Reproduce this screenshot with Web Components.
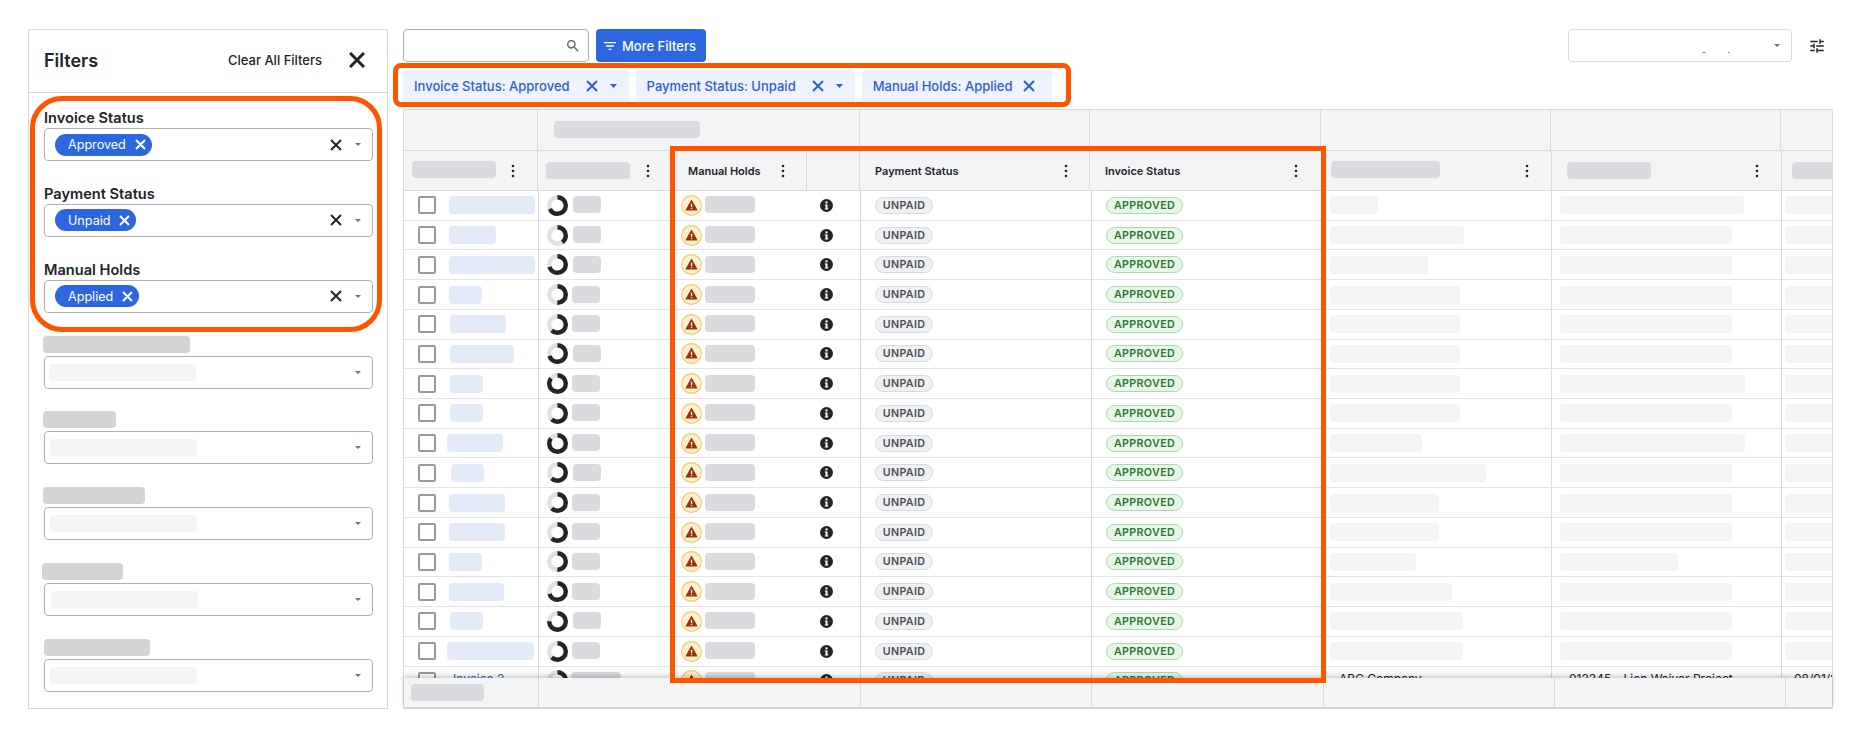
<!DOCTYPE html>
<html>
<head>
<meta charset="utf-8">
<title>Invoices</title>
<style>
  html, body { margin: 0; background: #fff; }
  body { font-family: Inter, "Liberation Sans", sans-serif; color: #212529; overflow: hidden; }
</style>
</head>
<body>
<invoice-page></invoice-page>
<script>
const xIcon = (size, stroke, color) => `<svg width="${size}" height="${size}" viewBox="0 0 ${size} ${size}" style="display:block;flex:none"><path d="M1 1L${size-1} ${size-1}M${size-1} 1L1 ${size-1}" stroke="${color}" stroke-width="${stroke}" fill="none"/></svg>`;
const caret = (w, h, color) => `<svg width="${w}" height="${h}" viewBox="0 0 ${w} ${h}" style="display:block;flex:none"><path d="M0 0H${w}L${w/2} ${h}Z" fill="${color}"/></svg>`;

class filterField extends HTMLElement {
  constructor() {
    super();
    let shadowRoot = this.attachShadow({mode: 'open'});
    const label = this.getAttribute('label');
    const tag = this.getAttribute('tag');
    const tagWidth = this.getAttribute('tag-width');
    const skelLabel = this.getAttribute('skel-label') || '0,0';
    const skelLeft = this.getAttribute('skel-left') || '5';
    const [labelLeft, labelWidth] = skelLabel.split(',');
    shadowRoot.innerHTML = `
    <style>
      :host{ display:block; height:75.86px; }
      .label{ height:20px; line-height:20px; font-size:14.6px; font-weight:600; color:#212529; }
      .skelLabel{ height:17px; margin-top:0; margin-bottom:3px; background:#d3d4d6; border-radius:4px; width:${labelWidth}px; margin-left:${labelLeft}px; }
      .box{ box-sizing:border-box; height:33px; border:1px solid #adb1b5; border-radius:4px; display:flex; align-items:center; padding-right:11px; background:#fff; }
      .tag{ display:flex; align-items:center; justify-content:space-between; box-sizing:border-box; width:${tagWidth}px; height:22px; margin-left:10px; padding:0 6px 0 13px; background:#2c66e0; color:#fff; border-radius:11px; font-size:12.6px; }
      .skel{ width:147px; height:17px; margin-left:${skelLeft}px; background:#f3f4f6; border-radius:4px; }
      .right{ margin-left:auto; display:flex; align-items:center; gap:13px; }
    </style>
    ${label ? `<div class="label">${label}</div>` : `<div class="skelLabel"></div>`}
    <div class="box">
      ${tag ? `<div class="tag"><span>${tag}</span>${xIcon(11, 2, '#fff')}</div>` : `<div class="skel"></div>`}
      <div class="right">${tag ? xIcon(12, 2, '#212529') : ''}${caret(6, 3, '#6b7280')}</div>
    </div>`;
  }
}

class filterPanel extends HTMLElement {
  constructor() {
    super();
    let shadowRoot = this.attachShadow({mode: 'open'});
    shadowRoot.innerHTML = `
    <style>
      :host{ display:block; position:relative; box-sizing:border-box; flex:none; width:360px; height:680px; border:1px solid #d8dadd; background:#fff; }
      .head{ box-sizing:border-box; height:63px; border-bottom:1px solid #d8dadd; display:flex; align-items:center; padding:0 22px 2px 15px; }
      .title{ font-size:18px; font-weight:600; }
      .clear{ margin-left:auto; margin-right:27px; font-size:13px; font-weight:500; }
      .list{ padding:15px 14px 0 15px; }
      .ring{ position:absolute; left:1px; top:66px; box-sizing:border-box; width:352px; height:236px; border:5px solid #ff5500; border-radius:32px; pointer-events:none; }
    </style>
    <div class="head">
      <div class="title">Filters</div>
      <div class="clear">Clear All Filters</div>
      ${xIcon(16, 3, '#212529')}
    </div>
    <div class="list">
      <filter-field label="Invoice Status" tag="Approved" tag-width="97"></filter-field>
      <filter-field label="Payment Status" tag="Unpaid" tag-width="81"></filter-field>
      <filter-field label="Manual Holds" tag="Applied" tag-width="84"></filter-field>
      <filter-field skel-label="-1,147" skel-left="4"></filter-field>
      <filter-field skel-label="-1,73" skel-left="5"></filter-field>
      <filter-field skel-label="-1,102" skel-left="5"></filter-field>
      <filter-field skel-label="-2,81" skel-left="6"></filter-field>
      <filter-field skel-label="0,106" skel-left="5"></filter-field>
    </div>
    <div class="ring"></div>`;
  }
}

class filterChip extends HTMLElement {
  constructor() {
    super();
    let shadowRoot = this.attachShadow({mode: 'open'});
    const hasCaret = this.hasAttribute('caret');
    shadowRoot.innerHTML = `
    <style>
      :host{ display:flex; align-items:center; box-sizing:border-box; height:32px; padding:0 ${hasCaret ? 12 : 17}px 0 11px; background:#edf2fd; border-radius:3px; color:#2c62c9; font-size:13px; font-weight:500; white-space:nowrap; }
      .x{ margin-left:${hasCaret ? 16 : 11}px; }
      .c{ margin-left:12px; }
    </style>
    <slot></slot>
    <span class="x">${xIcon(12, 2, '#2c62c9')}</span>
    ${hasCaret ? `<span class="c">${caret(7, 4, '#2c62c9')}</span>` : ''}`;
  }
}

class topBar extends HTMLElement {
  constructor() {
    super();
    let shadowRoot = this.attachShadow({mode: 'open'});
    shadowRoot.innerHTML = `
    <style>
      :host{ display:flex; align-items:stretch; height:33px; margin-bottom:8px; }
      .search{ box-sizing:border-box; width:186px; border:1px solid #adb1b5; border-radius:4px; display:flex; align-items:center; justify-content:flex-end; padding-right:7px; }
      .more{ box-sizing:border-box; width:110px; margin-left:7px; background:#2c66e0; border-radius:4px; color:#fff; display:flex; align-items:center; padding-left:6px; gap:4px; font-size:13px; font-weight:500; }
      .select{ box-sizing:border-box; width:224px; margin-left:auto; border:1px solid #d7d9dc; border-radius:4px; display:flex; align-items:center; justify-content:flex-end; padding-right:11px; position:relative; }
      .specks{ position:absolute; left:133px; top:22px; display:block; }
      .tune{ margin:0 7px 0 16px; align-self:center; display:block; }
    </style>
    <div class="search">
      <svg width="16" height="16" viewBox="0 0 24 24" fill="#5c6166"><path d="M15.5 14h-.79l-.28-.27A6.47 6.47 0 0 0 16 9.5 6.5 6.5 0 1 0 9.5 16c1.61 0 3.09-.59 4.23-1.57l.27.28v.79l5 4.99L20.49 19l-4.99-5zm-6 0C7.01 14 5 11.99 5 9.5S7.01 5 9.5 5 14 7.01 14 9.5 11.99 14 9.5 14z"/></svg>
    </div>
    <div class="more">
      <svg width="16" height="16" viewBox="0 0 24 24" fill="#fff"><path d="M10 18h4v-2h-4v2zM3 6v2h18V6H3zm3 7h12v-2H6v2z"/></svg>
      <span>More Filters</span>
    </div>
    <div class="select">
      <svg class="specks" width="30" height="2"><rect x="0" y="0" width="4" height="1" fill="#8a8d91"/><rect x="26" y="0" width="2" height="1" fill="#8a8d91"/></svg>
      ${caret(6, 3, '#6b7280')}
    </div>
    <svg class="tune" width="18" height="18" viewBox="0 0 24 24" fill="#212529"><path d="M3 17v2h6v-2H3zM3 5v2h10V5H3zm10 16v-2h8v-2h-8v-2h-2v6h2zM7 9v2H3v2h4v2h2V9H7zm14 4v-2H11v2h10zm-6-4h2V7h4V5h-4V3h-2v6z"/></svg>`;
  }
}

class progressRing extends HTMLElement {
  constructor() {
    super();
    let shadowRoot = this.attachShadow({mode: 'open'});
    const pct = Number(this.getAttribute('pct'));
    const c = 2 * Math.PI * 8.3;
    shadowRoot.innerHTML = `
    <style>:host{ display:block; flex:none; width:21px; height:21px; } svg{ display:block; }</style>
    <svg width="21" height="21" viewBox="0 0 21 21" fill="none" stroke-width="4.4">
      <circle cx="10.5" cy="10.5" r="8.3" stroke="#dfe1e4"/>
      <circle cx="10.5" cy="10.5" r="8.3" stroke="#212529" stroke-dasharray="${c * pct / 100} ${c}" transform="rotate(-90 10.5 10.5)"/>
    </svg>`;
  }
}

class kebabMenu extends HTMLElement {
  constructor() {
    super();
    let shadowRoot = this.attachShadow({mode: 'open'});
    shadowRoot.innerHTML = `
    <style>:host{ display:block; flex:none; width:4px; height:14px; } svg{ display:block; }</style>
    <svg width="4" height="14" viewBox="0 0 4 14" fill="#212529"><circle cx="2" cy="2" r="1.3"/><circle cx="2" cy="7" r="1.3"/><circle cx="2" cy="12" r="1.3"/></svg>`;
  }
}

class statusPill extends HTMLElement {
  constructor() {
    super();
    let shadowRoot = this.attachShadow({mode: 'open'});
    const green = this.getAttribute('kind') === 'green';
    shadowRoot.innerHTML = `
    <style>
      :host{ display:flex; align-items:center; justify-content:center; box-sizing:border-box; flex:none; height:17px; width:${green ? 77 : 58}px; border-radius:9px; border:1px solid ${green ? '#a6dca9' : '#d8dadd'}; background:${green ? '#e7f6e7' : '#eff0f2'}; color:${green ? '#2a7a30' : '#495057'}; font-size:10.7px; font-weight:600; letter-spacing:.35px; }
    </style>
    <slot></slot>`;
  }
}

class tableRow extends HTMLElement {
  constructor() {
    super();
    let shadowRoot = this.attachShadow({mode: 'open'});
    const d = JSON.parse(this.getAttribute('data'));
    const link = d.text
      ? `<span class="txt blue" style="margin-left:17px">${d.text}</span>`
      : `<div class="bar link" style="margin-left:${d.lx - 436}px;width:${d.lw}px"></div>`;
    const lightBar = (w, t) => t ? `<span class="txt" style="margin-left:9px">${t}</span>` : `<div class="bar light" style="width:${w}px"></div>`;
    shadowRoot.innerHTML = `
    <style>
      :host{ display:grid; box-sizing:border-box; height:29.73px; grid-template-columns:135px 136px 132px 54px 231px 230px 230px 230px 50px; border-bottom:1px solid #e1e3e6; background:#fff; flex:none; }
      .cell{ display:flex; align-items:center; min-width:0; overflow:hidden; white-space:nowrap; }
      .line{ border-right:1px solid #d8dadd; }
      .bar{ height:18px; border-radius:4px; flex:none; }
      .link{ background:#e4ebf8; }
      .light{ background:#f3f4f6; }
      .dark{ background:#d9dbde; height:17px; margin-top:-1px; }
      .check{ box-sizing:border-box; width:18px; height:18px; border:2px solid #9a9a9a; border-radius:2px; flex:none; margin-left:14px; }
      .txt{ font-size:12px; color:#212529; margin-bottom:4px; }
      .blue{ color:#2c62c9; }
    </style>
    <div class="cell line"><div class="check"></div>${link}</div>
    <div class="cell" style="padding-left:8px"><progress-ring pct="${d.pct}"></progress-ring><div class="bar dark" style="margin-left:${d.sx - 568}px;width:${d.sw || 28}px"></div></div>
    <div class="cell" style="padding-left:6px"><warn-badge></warn-badge><div class="bar dark" style="margin-left:3px;width:50px"></div></div>
    <div class="cell line" style="padding-left:13px"><info-dot></info-dot></div>
    <div class="cell line" style="padding-left:14px"><status-pill>UNPAID</status-pill></div>
    <div class="cell line" style="padding-left:14px"><status-pill kind="green">APPROVED</status-pill></div>
    <div class="cell line" style="padding-left:8px">${lightBar(d.a, d.textA)}</div>
    <div class="cell line" style="padding-left:8px">${lightBar(d.b, d.textB)}</div>
    <div class="cell" style="padding-left:3px">${lightBar(52, d.textC)}</div>`;
  }
}

class warnBadge extends HTMLElement {
  constructor() {
    super();
    let shadowRoot = this.attachShadow({mode: 'open'});
    shadowRoot.innerHTML = `
    <style>:host{ display:block; flex:none; width:21px; height:21px; } svg{ display:block; }</style>
    <svg width="21" height="21" viewBox="0 0 21 21">
      <circle cx="10.5" cy="10.5" r="9.9" fill="#fdf0cf" stroke="#f4c867" stroke-width="1.1"/>
      <path d="M10.5 5.4L15.8 15H5.2Z" fill="#9c2f0a" stroke="#9c2f0a" stroke-width="1.1" stroke-linejoin="round"/>
      <rect x="9.9" y="8.6" width="1.3" height="3.4" fill="#fff"/>
      <rect x="9.9" y="12.8" width="1.3" height="1.3" fill="#fff"/>
    </svg>`;
  }
}

class infoDot extends HTMLElement {
  constructor() {
    super();
    let shadowRoot = this.attachShadow({mode: 'open'});
    shadowRoot.innerHTML = `
    <style>:host{ display:block; flex:none; width:13px; height:13px; } svg{ display:block; }</style>
    <svg width="13" height="13" viewBox="0 0 13 13">
      <circle cx="6.5" cy="6.5" r="6.5" fill="#212529"/>
      <rect x="5.5" y="2.4" width="2" height="2" fill="#fff"/>
      <path d="M4.8 5.4H7.5V9.4H8.3V10.6H4.8V9.4H5.6V6.6H4.8Z" fill="#fff"/>
    </svg>`;
  }
}

const rowsData = [
  {lx:449,lw:86,pct:68,sx:573,a:48,b:184},
  {lx:449,lw:47,pct:40,sx:573,a:134,b:172},
  {lx:449,lw:86,pct:70,sx:573,a:98,b:172},
  {lx:449,lw:33,pct:50,sx:572,a:130,b:172},
  {lx:450,lw:56,pct:62,sx:572,a:130,b:172},
  {lx:450,lw:64,pct:70,sx:573,a:130,b:172},
  {lx:450,lw:33,pct:85,sx:572,a:130,b:185},
  {lx:450,lw:33,pct:62,sx:572,a:130,b:172},
  {lx:447,lw:56,pct:85,sx:572,a:92,b:185},
  {lx:451,lw:33,pct:62,sx:573,a:156,b:172},
  {lx:449,lw:56,pct:62,sx:572,a:109,b:172},
  {lx:449,lw:56,pct:62,sx:572,a:109,b:172},
  {lx:449,lw:33,pct:50,sx:572,a:86,b:118},
  {lx:449,lw:55,pct:70,sx:572,a:122,b:172},
  {lx:450,lw:33,pct:75,sx:573,a:133,b:172},
  {lx:447,lw:87,pct:62,sx:572,a:133,b:172},
  {text:'Invoice 2',pct:35,sx:571,sw:50,textA:'ABC Company',textB:'012345 - Lien Waiver Project',textC:'08/01/2023'}
];

class invoiceTable extends HTMLElement {
  constructor() {
    super();
    let shadowRoot = this.attachShadow({mode: 'open'});
    const rows = rowsData.map(r => `<table-row data='${JSON.stringify(r)}'></table-row>`).join('');
    shadowRoot.innerHTML = `
    <style>
      :host{ display:block; position:relative; box-sizing:border-box; height:600px; border:1px solid #d8dadd; border-bottom-width:2px; background:#fff; }
      .groupRow, .headRow, .footRow{ display:grid; background:#f3f4f6; box-sizing:border-box; }
      .groupRow{ height:41px; border-bottom:1px solid #d8dadd; grid-template-columns:134px 322px 230px 231px 230px 230px 51px; }
      .headRow{ height:40px; border-bottom:1px solid #d8dadd; grid-template-columns:134px 137px 132px 53px 230px 232px 230px 230px 50px; }
      .footRow{ height:29px; position:relative; box-shadow:0 -2px 5px rgba(0,0,0,.22); grid-template-columns:135px 322px 231px 232px 231px 231px 46px; }
      .cell{ display:flex; align-items:center; min-width:0; overflow:hidden; border-right:1px solid #d8dadd; box-sizing:border-box; }
      .cell:last-child{ border-right:0; }
      .kebab{ margin-left:auto; }
      .title{ font-size:11px; font-weight:600; color:#212529; white-space:nowrap; }
      .bar{ height:17px; background:#d9dbde; border-radius:4px; flex:none; }
      .body{ height:487px; overflow:hidden; display:flex; flex-direction:column; }
      .ring{ position:absolute; left:266px; top:36px; box-sizing:border-box; width:656px; height:537px; border:5px solid #ff5500; pointer-events:none; }
    </style>
    <div class="groupRow">
      <div class="cell"></div>
      <div class="cell" style="padding-left:16px"><div class="bar" style="width:146px;margin-top:-1px"></div></div>
      <div class="cell"></div><div class="cell"></div><div class="cell"></div><div class="cell"></div><div class="cell"></div>
    </div>
    <div class="headRow">
      <div class="cell" style="padding:0 22px 0 8px"><div class="bar" style="width:84px;margin-top:-3px"></div><kebab-menu class="kebab"></kebab-menu></div>
      <div class="cell" style="padding:0 24px 0 8px"><div class="bar" style="width:84px;margin-top:-1px"></div><kebab-menu class="kebab"></kebab-menu></div>
      <div class="cell" style="padding:0 21px 0 13px"><span class="title">Manual Holds</span><kebab-menu class="kebab"></kebab-menu></div>
      <div class="cell"></div>
      <div class="cell" style="padding:0 21px 0 15px"><span class="title">Payment Status</span><kebab-menu class="kebab"></kebab-menu></div>
      <div class="cell" style="padding:0 23px 0 15px"><span class="title">Invoice Status</span><kebab-menu class="kebab"></kebab-menu></div>
      <div class="cell" style="padding:0 22px 0 9px"><div class="bar" style="width:109px;margin-top:-3px"></div><kebab-menu class="kebab"></kebab-menu></div>
      <div class="cell" style="padding:0 22px 0 15px"><div class="bar" style="width:84px;margin-top:-1px"></div><kebab-menu class="kebab"></kebab-menu></div>
      <div class="cell" style="padding-left:10px"><div class="bar" style="width:50px"></div></div>
    </div>
    <div class="body">${rows}</div>
    <div class="footRow">
      <div class="cell" style="padding-left:7px"><div class="bar" style="width:73px"></div></div>
      <div class="cell"></div><div class="cell"></div><div class="cell"></div><div class="cell"></div><div class="cell"></div><div class="cell"></div>
    </div>
    <div class="ring"></div>`;
  }
}

class invoicePage extends HTMLElement {
  constructor() {
    super();
    let shadowRoot = this.attachShadow({mode: 'open'});
    shadowRoot.innerHTML = `
    <style>
      :host{ display:flex; box-sizing:border-box; width:1861px; height:737px; padding:29px 0 0 28px; gap:15px; }
      .main{ width:1430px; flex:none; }
      .chips{ position:relative; display:flex; gap:7px; height:32px; margin-bottom:7px; }
      .ring{ position:absolute; left:-10px; top:-7px; box-sizing:border-box; width:678px; height:44px; border:5px solid #ff5500; border-radius:8px; pointer-events:none; }
    </style>
    <filter-panel></filter-panel>
    <div class="main">
      <top-bar></top-bar>
      <div class="chips">
        <filter-chip caret>Invoice Status: Approved</filter-chip>
        <filter-chip caret>Payment Status: Unpaid</filter-chip>
        <filter-chip>Manual Holds: Applied</filter-chip>
        <div class="ring"></div>
      </div>
      <invoice-table></invoice-table>
    </div>`;
  }
}

customElements.define('filter-field', filterField);
customElements.define('filter-panel', filterPanel);
customElements.define('filter-chip', filterChip);
customElements.define('top-bar', topBar);
customElements.define('progress-ring', progressRing);
customElements.define('kebab-menu', kebabMenu);
customElements.define('status-pill', statusPill);
customElements.define('warn-badge', warnBadge);
customElements.define('info-dot', infoDot);
customElements.define('table-row', tableRow);
customElements.define('invoice-table', invoiceTable);
customElements.define('invoice-page', invoicePage);
</script>
</body>
</html>
